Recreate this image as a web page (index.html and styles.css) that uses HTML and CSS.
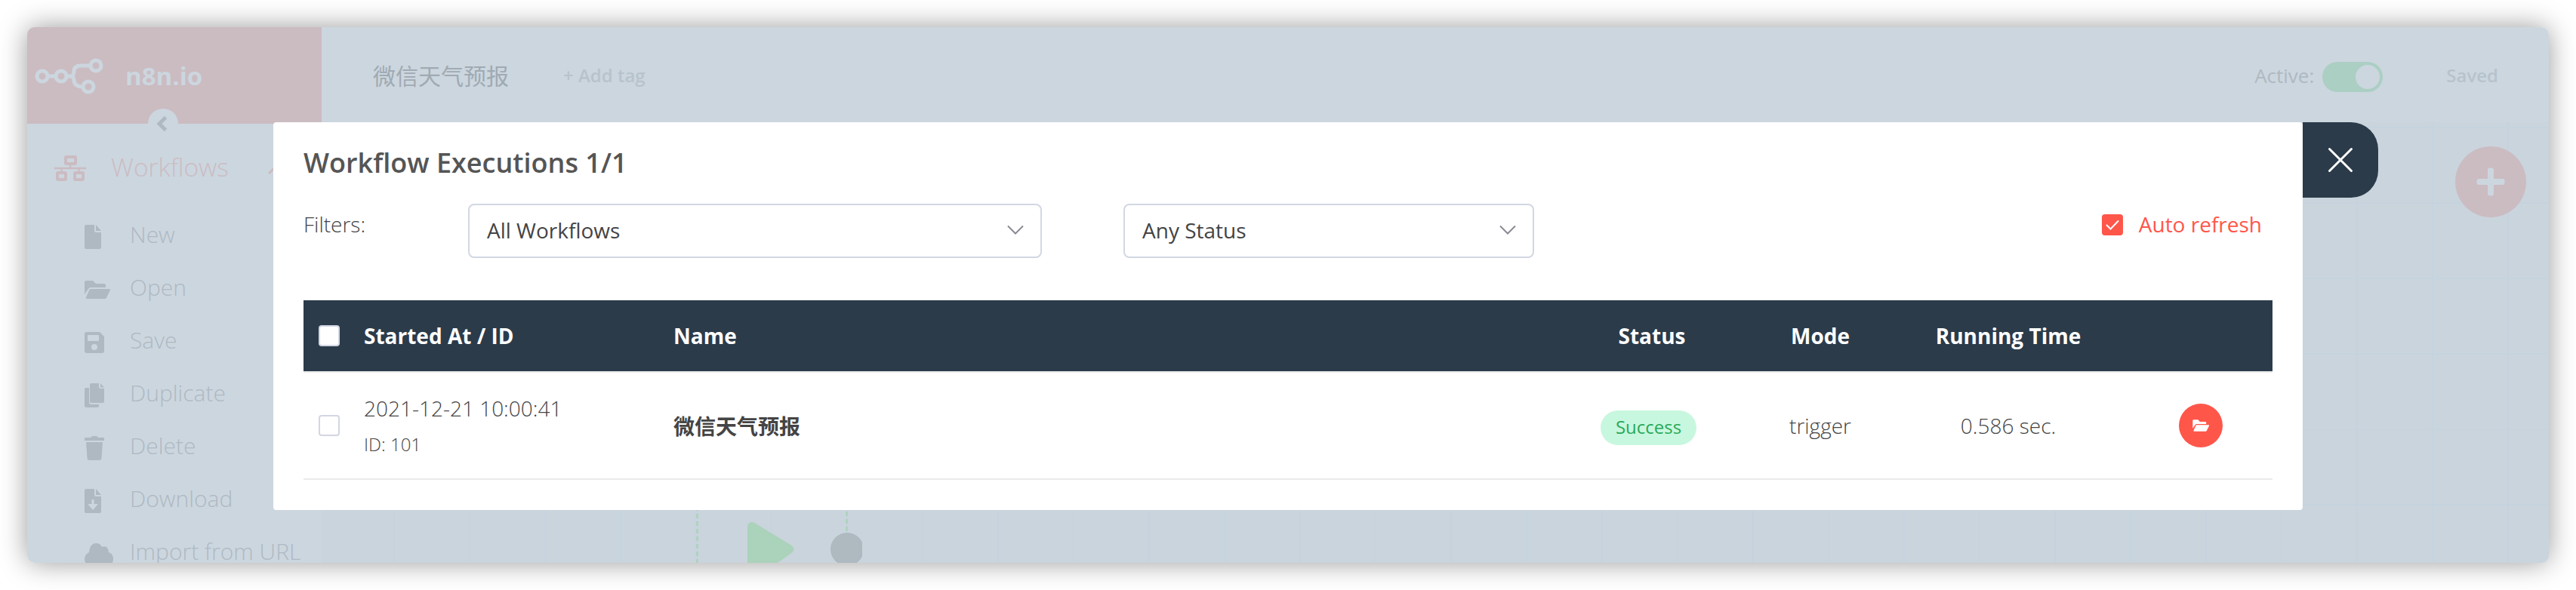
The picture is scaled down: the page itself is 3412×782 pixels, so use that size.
FILE: index.html
```html
<!DOCTYPE html>
<html lang="zh-CN">
<head>
<meta charset="utf-8">
<title>n8n.io</title>
<link rel="stylesheet" href="styles.css">
</head>
<body>
<div class="window">
  <div class="app">
    <aside class="sidebar">
      <div class="brand">
        <svg class="logo" width="92" height="48" viewBox="0 0 92 48" fill="none" stroke="currentColor" stroke-width="5">
          <circle cx="10" cy="24" r="7"/><circle cx="35" cy="24" r="7"/><circle cx="81" cy="10" r="7"/><circle cx="71" cy="38" r="7"/>
          <path d="M17 24h11M42 24h7M74 10H62Q52 10 52 17Q52 24 47 24Q52 24 52 30Q53 38 64 38"/>
        </svg>
        <span class="brand-name">n8n.io</span>
        <span class="collapse"><svg width="40" height="40" viewBox="0 0 40 40" fill="none" stroke="currentColor" stroke-width="5"><path d="M23.500 11.500L15 20l8.500 8.500"/></svg></span>
      </div>
      <div class="menu-head">
        <svg class="sitemap" width="42" height="34" viewBox="0 0 42 34" fill="none" stroke="currentColor">
          <g stroke-width="4"><rect x="15" y="2" width="13" height="9" rx="1"/><rect x="4" y="23" width="11" height="9" rx="1"/><rect x="27" y="23" width="11" height="9" rx="1"/></g>
          <path stroke-width="2.500" d="M0 17h42M21 12v5M9.500 17v5M32.500 17v5"/>
        </svg>
        <span>Workflows</span>
        <svg class="chev" width="20" height="12" viewBox="0 0 20 12" fill="none" stroke="currentColor" stroke-width="3"><path d="M1 11l9-9 9 9"/></svg>
      </div>
      <ul class="menu">
        <li><svg width="40" height="32" viewBox="0 0 40 32" fill="currentColor"><path d="M2 0h11v8q0 2 2 2h7v20q0 2-2 2H2q-2 0-2-2V2q0-2 2-2zM15 0l7 8h-7z"/></svg>New</li>
        <li><svg width="40" height="32" viewBox="0 0 40 32" fill="currentColor"><path d="M0 22V6q0-2 2-2h9l4 4h11q2 0 2 2v3H8q-2 0-3 2zM8 15h25q1.500 0 1 1.500l-5 10q-.7 1.500-2 1.500H3q-2 0-1-2l4-9q.7-2 2-2z"/></svg>Open</li>
        <li><svg width="40" height="32" viewBox="0 0 40 32" fill="currentColor"><path fill-rule="evenodd" d="M3 2h17l6 6v19q0 3-3 3H3q-3 0-3-3V5q0-3 3-3zM5 6q-1 0-1 1v6q0 1 1 1h13q1 0 1-1V7q0-1-1-1zM13 18a4 4 0 1 0 0 8 4 4 0 0 0 0-8z"/></svg>Save</li>
        <li><svg width="40" height="32" viewBox="0 0 40 32" fill="currentColor"><path d="M9 0h10v5q0 2 2 2h5v17q0 2-2 2H9q-2 0-2-2V2q0-2 2-2zM21 0l5 5.500h-5zM2 6h4v19q0 3 3 3h10v2q0 2-2 2H2q-2 0-2-2V8q0-2 2-2z"/></svg>Duplicate</li>
        <li><svg width="40" height="32" viewBox="0 0 40 32" fill="currentColor"><path d="M1 2h7l2-2h6l2 2h7q1 0 1 1v3H0V3q0-1 1-1zM2 8h22l-1.500 21q-.2 3-3 3h-13q-2.800 0-3-3z"/></svg>Delete</li>
        <li><svg width="40" height="32" viewBox="0 0 40 32" fill="currentColor"><path fill-rule="evenodd" d="M2 0h11v8q0 2 2 2h7v20q0 2-2 2H2q-2 0-2-2V2q0-2 2-2zM15 0l7 8h-7zM9.500 14v6H5q-1 0 0 1l6 7 6-7q1-1 0-1h-4.500v-6z"/></svg>Download</li>
        <li><svg width="40" height="32" viewBox="0 0 40 32" fill="currentColor"><path d="M8 32q-8-2-8-9 0-6 6-9Q7 2 15.500 2q5 0 7.500 5Q31 4 32 14q6 2 6 9 0 7-7 9z"/></svg>Import from URL</li>
      </ul>
    </aside>
    <main class="main">
      <header class="topbar">
        <span class="wf-name">微信天气预报</span>
        <span class="add-tag">+ Add tag</span>
        <span class="active-label">Active:</span>
        <span class="toggle"><i class="knob"></i></span>
        <span class="saved">Saved</span>
      </header>
      <div class="canvas">
        <svg class="nodes" width="220" height="70" viewBox="0 0 220 70">
          <g fill="none" stroke="#abd2ba" stroke-width="2.500"><path stroke-dasharray="6 4" d="M1.500 -5V70"/><path stroke-dasharray="6 4" d="M199.500 2V30"/></g>
          <path fill="#abd2ba" d="M68 70V24q0-8 6-8 3 0 5 2l46 28q9 6 0 12l-20 14z"/>
          <circle cx="200" cy="52" r="22" fill="#aeb9c0"/>
        </svg>
        <span class="add-node"><svg width="38" height="38" viewBox="0 0 38 38" fill="currentColor"><rect x="15" y="0.500" width="8" height="37" rx="3"/><rect x="0.500" y="15" width="37" height="8" rx="3"/></svg></span>
      </div>
    </main>
  </div>

  <section class="dialog">
    <button class="close"><svg width="36" height="36" viewBox="0 0 36 36" fill="none" stroke="#fff" stroke-width="3" stroke-linecap="round"><path d="M3.500 3.500l29 29M32.500 3.500l-29 29"/></svg></button>
    <h1 class="title">Workflow Executions 1/1</h1>
    <div class="filters">
      <span class="filters-label">Filters:</span>
      <div class="select select-wf">All Workflows<svg width="22" height="14" viewBox="0 0 22 14" fill="none" stroke="#888b92" stroke-width="2"><path d="M1 1.500l10 10 10-10"/></svg></div>
      <div class="select select-status">Any Status<svg width="22" height="14" viewBox="0 0 22 14" fill="none" stroke="#888b92" stroke-width="2"><path d="M1 1.500l10 10 10-10"/></svg></div>
      <label class="auto"><span class="box-checked"><svg width="28" height="28" viewBox="0 0 28 28" fill="none" stroke="#fff" stroke-width="2" stroke-linecap="round"><path d="M6.500 14.500l5 5L21.500 9"/></svg></span>Auto refresh</label>
    </div>
    <div class="table">
      <div class="row head">
        <span class="cell-check"><i class="box"></i></span><span>Started At / ID</span><span>Name</span><span class="mid">Status</span><span class="mid">Mode</span><span class="mid">Running Time</span><span></span>
      </div>
      <div class="row body-row">
        <span class="cell-check"><i class="box"></i></span>
        <span class="started"><span class="date">2021-12-21 10:00:41</span><span class="id">ID: 101</span></span>
        <span class="name">微信天气预报</span>
        <span class="mid"><b class="pill">Success</b></span>
        <span class="mid">trigger</span>
        <span class="mid">0.586 sec.</span>
        <span class="mid actions"><i class="open"><svg width="23" height="16" viewBox="0 3.500 35 25" fill="#fff"><path d="M0 22V6q0-2 2-2h9l4 4h11q2 0 2 2v3H8q-2 0-3 2zM8 15h25q1.500 0 1 1.500l-5 10q-.7 1.500-2 1.500H3q-2 0-1-2l4-9q.7-2 2-2z"/></svg></i></span>
      </div>
    </div>
  </section>
</div>
</body>
</html>
```
FILE: styles.css
```css
* { box-sizing: border-box; }
body {
  margin: 0;
  padding: 36px;
  height: 782px;
  overflow: hidden;
  background: #fff;
  font-family: "Open Sans", "Noto Sans CJK SC", sans-serif;
  font-size: 28px;
  color: #444;
}
.window {
  position: relative;
  width: 3340px;
  height: 710px;
  border-radius: 10px;
  box-shadow: 0 0 36px rgba(0, 0, 0, .4);
}
.app {
  display: flex;
  height: 710px;
  border-radius: 10px;
  overflow: hidden;
  background: #ccd6df;
}
.sidebar { width: 390px; flex: none; color: #aeb9c2; }
.brand {
  position: relative;
  display: flex;
  align-items: center;
  height: 128px;
  padding-left: 10px;
  background: #cbbcc2;
  color: #ccd6df;
}
.logo { margin-top: 2px; }
.brand-name { margin-left: 28px; font-size: 33px; font-weight: 700; }
.collapse {
  position: absolute;
  left: 160px;
  top: 108px;
  width: 40px;
  height: 40px;
  border-radius: 50%;
  background: #ccd6df;
  color: #aeb9c2;
}
.collapse svg, .close svg, .select svg, .open svg, .box-checked svg { display: block; }
.menu-head {
  display: flex;
  align-items: center;
  height: 112px;
  padding: 2px 0 0 36px;
  color: #cbbcc2;
  font-size: 33.500px;
  font-weight: 300;
}
.menu-head span { margin-left: 33px; }
.sitemap { margin-top: 4px; }
.chev { margin: 8px 0 0 52px; }
.menu { list-style: none; margin: 0; padding: 0 0 0 76px; }
.menu li {
  display: flex;
  align-items: center;
  gap: 20px;
  height: 70px;
  font-size: 30px;
  line-height: 36px;
  font-weight: 300;
  white-space: nowrap;
}
.menu svg { flex: none; margin-top: 6px; }
.main { flex: 1; }
.topbar {
  display: flex;
  align-items: center;
  height: 126px;
  padding-left: 68px;
  color: #aeb9c2;
}
.wf-name { font-size: 30px; color: #9faab2; }
.add-tag { margin-left: 72px; font-size: 24px; font-weight: 600; color: #b7c3cc; }
.active-label { margin: 2px 0 0 auto; font-size: 26px; }
.toggle { width: 80px; height: 40px; margin: 6px 0 0 11px; padding: 4px; border-radius: 20px; background: #abcfc3; }
.knob { display: block; width: 32px; height: 32px; margin-left: 40px; border-radius: 50%; background: #ccd6df; }
.saved { margin: 0 67px 0 84px; font-size: 24px; font-weight: 600; color: #b7c3cc; }
.canvas {
  position: relative;
  height: 584px;
  background-color: #cad4dd;
  background-image: linear-gradient(90deg, #c5d3df 2px, transparent 2px), linear-gradient(#c5d3df 2px, transparent 2px);
  background-size: 100px 100px;
  background-position: 95px 6px;
}
.nodes { position: absolute; left: 496px; bottom: 0; }
.add-node {
  position: absolute;
  right: 30px;
  top: 32px;
  display: grid;
  place-items: center;
  width: 94px;
  height: 94px;
  border-radius: 50%;
  background: #cbbcc2;
  color: #ccd6df;
}
.dialog {
  position: absolute;
  left: 326px;
  top: 126px;
  width: 2688px;
  height: 514px;
  padding: 29px 40px 0;
  border-radius: 4px;
  background: #fff;
}
.close {
  position: absolute;
  left: 2688px;
  top: 0;
  display: grid;
  place-items: center;
  width: 100px;
  height: 100px;
  padding: 0;
  border: 0;
  border-radius: 0 36px 36px 0;
  background: #2b3b4a;
}
.title { margin: 0; height: 50px; line-height: 50px; font-size: 36px; font-weight: 600; color: #555; }
.filters { display: flex; height: 128px; margin-top: 29px; }
.filters-label { width: 218px; padding-top: 8px; font-weight: 300; }
.select {
  display: flex;
  align-items: center;
  justify-content: space-between;
  height: 72px;
  padding: 0 22px 2px 23px;
  border: 2px solid #d2d7e3;
  border-radius: 8px;
}
.select-wf { width: 760px; }
.select-status { width: 544px; margin-left: 108px; }
.auto { display: flex; gap: 21px; margin: 8px 14px 0 auto; height: 38px; align-items: center; color: #ff564a; }
.box-checked { width: 28px; height: 28px; margin-top: 2px; border-radius: 4px; background: #ff564a; }
.row {
  display: grid;
  grid-template-columns: 80px 410px 1182px 228px 218px 280px 1fr;
  align-items: center;
  border-bottom: 2px solid #eaeaea;
}
.head { height: 96px; background: #2b3b4a; background-clip: padding-box; color: #fff; font-weight: 700; }
.body-row { height: 142px; font-weight: 300; }
.cell-check { padding-left: 20px; }
.box { display: block; width: 28px; height: 28px; border: 2px solid #d3d6e3; border-radius: 4px; background: #fff; }
.mid { text-align: center; }
.started { display: flex; flex-direction: column; gap: 6px; }
.date { line-height: 44px; }
.id { font-size: 24px; line-height: 40px; }
.name { font-weight: 700; }
.pill {
  display: inline-block;
  height: 46px;
  margin: 5px 9px 0 0;
  padding: 0 20px;
  line-height: 43px;
  border-radius: 23px;
  background: #c8f7df;
  color: #2aa957;
  font-size: 24px;
  font-weight: 400;
}
.actions { padding-left: 20px; }
.open { display: inline-grid; place-items: center; width: 58px; height: 58px; border-radius: 50%; background: #ff564a; vertical-align: middle; }
```
